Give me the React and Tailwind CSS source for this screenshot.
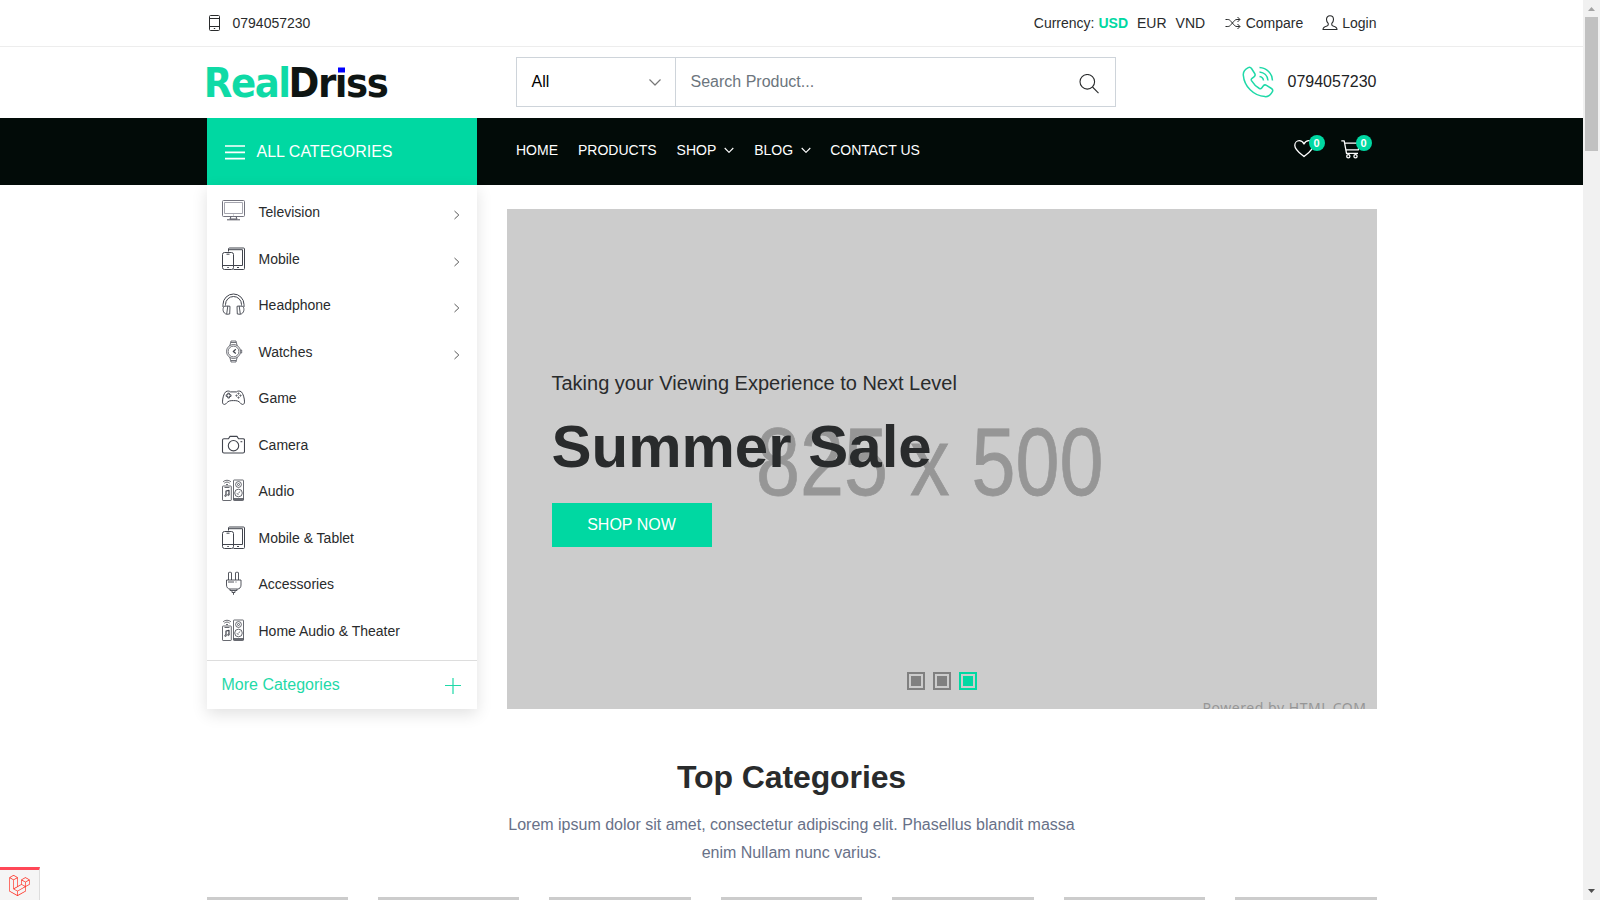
import React from "react";
import { FaLaravel } from "react-icons/fa";

function Icon({ children, className, box = 24, sw = 1 }) {
  return (
    <svg viewBox={`0 0 ${box} ${box}`} className={className} fill="none" stroke="currentColor" strokeWidth={sw} strokeLinejoin="round">
      {children}
    </svg>
  );
}

const Tv = () => (
  <Icon className="h-6 w-6">
    <rect x="1.5" y="1.500" width="22" height="16" rx="1" stroke="#73737e" />
    <path d="M3.500 3.500h18v11H3.500zM12 16h1" stroke="#a5a5ae" />
    <path d="M10 17.500l-1 2.500h7l-1-2.500M6 20.800h13" stroke="#555560" />
  </Icon>
);
const Mobile = () => (
  <Icon className="h-6 w-6">
    <path d="M7.500 5.500V3a1 1 0 0 1 1-1H22.500a1 1 0 0 1 1 1V22.500a1 1 0 0 1-1 1H12.500M8 3.700H21.500V19.500H13M16 21.500h2" />
    <rect x="1.500" y="6.500" width="11" height="17" rx="2" />
    <path d="M1.500 19.500h11M5.500 8.200h3M6.300 21.500h1.500" />
  </Icon>
);
const Headphone = () => (
  <Icon className="h-6 w-6">
    <path d="M2 15V12.500a10.500 10.500 0 0 1 21 0v2.500M4.500 13.500v-1a8 8 0 0 1 16 0v1" />
    <path d="M6.800 14l2.200 .3-.300 7.700-3 .3c-4-1-4.500-5.800-2.500-8zM18.200 14l-2.200 .3.300 7.700 3 .3c4-1 4.500-5.800 2.500-8zM6.800 14L5.700 22M18.200 14l1.100 8" strokeWidth=".9" />
  </Icon>
);
const Watch = () => (
  <Icon className="h-6 w-6" sw={0.75}>
    <circle cx="12.500" cy="12.500" r="7" />
    <circle cx="12.500" cy="12.500" r="5.400" />
    <path d="M8.800 6.800L10 2h5l1.200 4.800M10 3.500h5M8.800 18.200L10 23h5l1.200-4.800M10 21.500h5M19.500 11h1.200v3h-1.200" />
    <path d="M14.800 10.200L12.300 12.500l2.500 2" strokeWidth="1.200" />
  </Icon>
);
const Game = () => (
  <Icon className="h-6 w-6">
    <g transform="translate(0 .7)">
      <path d="M4.800 6c2-1 3.500-.8 4.700.2h6c1.200-1 2.700-1.200 4.700-.2 2 1.700 3.300 6.700 3.300 10.200 0 2.800-2.300 3.400-4 1.200-2-2.300-3.500-2.500-7-2.500s-5 .2-7 2.500c-1.700 2.200-4 1.600-4-1.200C1.500 12.700 2.800 7.700 4.800 6z" />
      <path d="M6.800 7.500h1.600v1.600H10v1.600H8.400v1.600H6.800v-1.600H5.200V9.100h1.600z" />
      <circle cx="17.500" cy="7.900" r=".6" /><circle cx="17.500" cy="11.900" r=".6" /><circle cx="15.500" cy="9.900" r=".6" /><circle cx="19.500" cy="9.900" r=".6" />
    </g>
  </Icon>
);
const Camera = () => (
  <Icon className="h-6 w-6" sw={1.100}>
    <g transform="translate(0 .7)">
      <path d="M3 6h4.500L9 3.700h7L17.500 6H22a1.500 1.500 0 0 1 1.500 1.500v11.300a1.500 1.500 0 0 1-1.500 1.500H3a1.500 1.500 0 0 1-1.500-1.500V7.500A1.500 1.500 0 0 1 3 6z" />
      <circle cx="12.500" cy="13" r="5.200" />
      <path d="M19.500 9h1.800" />
    </g>
  </Icon>
);
const Audio = () => (
  <Icon className="h-6 w-6" sw={0.8}>
    <rect x="1.500" y="8" width="8.800" height="14.500" rx=".6" />
    <path d="M2 4c2-2.300 6-2.300 8 0M3.300 5.200c1.600-1.500 3.900-1.500 5.400 0M5 6.500h2M3.500 9.500h5" />
    <path d="M5 17.500V13l3-.7v4.400" strokeWidth="1.200" />
    <circle cx="4.500" cy="17.700" r=".8" /><circle cx="7.400" cy="16.800" r=".8" />
    <rect x="12.500" y="2" width="10" height="20.500" rx=".6" />
    <circle cx="17.500" cy="6.500" r="2.900" /><circle cx="17.500" cy="6.500" r="1" />
    <circle cx="17.500" cy="15" r="3.800" /><path d="M19.200 13.500l-1.800 1.600M15.700 15.500l1.800 1M12.500 20.500h10M12.500 21.500h10" />
  </Icon>
);
const Plug = () => (
  <Icon className="h-6 w-6" sw={0.9}>
    <path d="M7.500 9V2a.7.700 0 0 1 .7-.7h1.600a.7.700 0 0 1 .7.700v7M14.500 9V2a.7.700 0 0 1 .7-.7h1.600a.7.700 0 0 1 .7.700v7" />
    <path d="M5.500 9h14.500v5c0 2.500-1.500 4-3.500 4H9c-2 0-3.500-1.500-3.500-4zM7 11h6M14.500 11h1M9 18v1.500h7V18M11 20v1.500h3V20M12.500 21.500v2.300" />
  </Icon>
);

const categories = [
  ["Television", Tv, true],
  ["Mobile", Mobile, true],
  ["Headphone", Headphone, true],
  ["Watches", Watch, true],
  ["Game", Game],
  ["Camera", Camera],
  ["Audio", Audio],
  ["Mobile & Tablet", Mobile],
  ["Accessories", Plug],
  ["Home Audio & Theater", Audio],
];

function TopBar() {
  return (
    <div className="h-[47px] border-b border-[#ededed]">
      <div className="mx-auto flex h-[46px] w-[1170px] items-center text-sm text-[#292b2c]">
        <Icon className="mr-[10px] h-4 w-4" box={16}>
          <rect x="2.500" y=".5" width="10" height="15" rx="1" />
          <path d="M2.500 3.500h10M2.500 11.500h10M6.800 13.500h1.400" />
        </Icon>
        <span>0794057230</span>
        <div className="ml-auto flex items-center">
          <span>Currency:</span>
          <span className="ml-1 font-bold text-[#00d8a2]">USD</span>
          <span className="ml-[9px]">EUR</span>
          <span className="ml-[9px]">VND</span>
          <Icon className="mr-[4.500px] ml-5 h-4 w-4" box={16}>
            <path d="M.5 4.500h2.300c1.500 0 2.300.8 3.200 1.900l2.800 3.300c.9 1.100 1.700 1.800 3.200 1.800h2.800M.5 11.500h2.300c1.500 0 2.300-.7 3.200-1.800l2.800-3.300c.9-1.100 1.700-1.900 3.200-1.900h2.800M12.500 2l2.500 2.500L12.500 7M12.500 9l2.500 2.500-2.500 2.500" />
          </Icon>
          <span>Compare</span>
          <Icon className="mr-[4.500px] ml-[18.500px] h-4 w-4" box={16} sw={1.100}>
            <path d="M8 .8c2.300 0 3.500 1.600 3.500 3.700 0 1.800-.8 3-1.700 3.900v1.400c0 .7.500 1 1.200 1.200 2.200.6 4 1.300 4 3.500H1c0-2.200 1.800-2.900 4-3.500.7-.2 1.200-.5 1.200-1.200V8.400C5.300 7.500 4.500 6.300 4.500 4.500 4.500 2.400 5.700.8 8 .8z" />
          </Icon>
          <span>Login</span>
        </div>
      </div>
    </div>
  );
}

function Header() {
  return (
    <div className="mx-auto flex h-[71px] w-[1170px] items-center">
      <svg className="h-12 w-[190px] overflow-visible" viewBox="0 0 190 48" fontFamily="'DejaVu Sans',sans-serif" fontWeight="700" fontSize="40">
        <g transform="scale(.93 1)" letterSpacing="-1.6">
          <text x="-3.500" y="38.500" fill="#0fdaa6">Real</text>
          <text x="87.700" y="38.500" fill="#0e1513">Driss</text>
        </g>
        <rect x="130" y="5" width="9" height="9.500" fill="#fff" />
        <rect x="131" y="8.500" width="7" height="5" fill="#0000ff" />
      </svg>
      <div className="-mt-px ml-[119px] flex h-[50px] w-[600px] border border-[#ced4da] text-base">
        <div className="flex w-[159px] items-center justify-between border-r border-[#ced4da] pr-[14px] pl-[15px] text-black">
          <span>All</span>
          <Icon className="h-3 w-3 text-[#777]" box={12} sw={1.200}><path d="M.5 3.500L6 9l5.500-5.500" /></Icon>
        </div>
        <div className="flex flex-1 items-center justify-between pr-4 pl-[15px] text-[#6c757d]">
          <span>Search Product...</span>
          <Icon className="relative top-0.5 h-5 w-5 text-[#292b2c]" box={20} sw={1.100}>
            <circle cx="8.300" cy="7.800" r="7.300" /><path d="M13.500 13l6 6.200" />
          </Icon>
        </div>
      </div>
      <div className="ml-auto flex items-center text-[#1d2224]">
        <Icon className="relative -top-px mr-[14px] h-8 w-8 text-[#1fd9a8]" box={32} sw={1.500}>
          <path d="M6.300 1.600c1.500-.8 2.400-.3 3.200.9l3.200 5c.8 1.300.5 2.400-.7 3.300l-2 1.500c-.9.700-1 1.400-.5 2.300 2.200 3.700 4.200 5.700 7.900 7.900.9.500 1.600.4 2.300-.5l1.500-2c.9-1.200 2-1.500 3.300-.7l5 3.200c1.200.8 1.700 1.700.9 3.200-1.500 2.800-4 5.300-7.500 4.900C11.500 29.800 2.200 20.500 1.300 9.100 1 5.600 3.500 3.100 6.300 1.600z" />
          <path d="M17.500 10.500c2.200.3 3.700 1.800 4 4M17.500 6c4.700.4 8.100 3.800 8.500 8.500M17.500 1.500c7.300.4 12.600 5.700 13 13" />
        </Icon>
        <span className="relative -top-px">0794057230</span>
      </div>
    </div>
  );
}

const NavChevron = () => (
  <Icon className="ml-2 h-[10px] w-[10px]" box={10} sw={1.100}><path d="M.7 3L5 7.300 9.300 3" /></Icon>
);

function Badge() {
  return (
    <span className="absolute -top-[5px] left-[15px] flex h-4 w-4 items-center justify-center rounded-full bg-[#00d8a2] text-[11px] font-bold leading-none text-white">0</span>
  );
}

function NavBar() {
  return (
    <div className="h-[67px] bg-[#020b08]">
      <div className="mx-auto flex h-full w-[1170px] text-sm text-white">
        <div className="flex w-[270px] items-center bg-[#00d8a2] pl-[18px] text-base">
          <Icon className="mr-3 h-5 w-5" box={20} sw={1.700}><path d="M0 4h20M0 10.300h20M0 16.700h20" /></Icon>
          <span>ALL CATEGORIES</span>
        </div>
        <div className="ml-[39.500px] flex items-center gap-5 pb-[3px]">
          <span>HOME</span>
          <span>PRODUCTS</span>
          <span className="flex items-center">SHOP<NavChevron /></span>
          <span className="flex items-center">BLOG<NavChevron /></span>
          <span className="-ml-px">CONTACT US</span>
        </div>
        <div className="mr-4 ml-auto flex gap-[27px] pt-[22px]">
          <div className="relative h-5 w-5">
            <Icon className="h-5 w-5" box={20} sw={1.300}>
              <path d="M10 16.600C5.500 12.800.8 9.800.8 5.500.8 2.800 2.800.700 5.300.700 7.300.700 9 2 10 4c1-2 2.700-3.300 4.700-3.300 2.500 0 4.500 2.100 4.500 4.800 0 4.300-4.700 7.300-9.200 11.100z" />
            </Icon>
            <Badge />
          </div>
          <div className="relative h-5 w-5">
            <Icon className="h-5 w-5" box={20} sw={1.300}>
              <path d="M.3.800h2.900l2.300 12.600h11.500M3.800 3.200h14.700l-1.200 6.600H5" />
              <circle cx="7.300" cy="16.300" r="1.600" /><circle cx="14.500" cy="16.300" r="1.600" />
            </Icon>
            <Badge />
          </div>
        </div>
      </div>
    </div>
  );
}

function Sidebar() {
  return (
    <div className="flex h-[524px] w-[270px] flex-col bg-white pt-1 shadow-[0_5px_15px_rgba(0,0,0,0.12)]">
      {categories.map(([name, Glyph, more]) => (
        <div key={name} className="flex h-[46.5px] items-center pr-[16px] pl-[14px] text-sm text-[#292b2c]">
          <span className="relative -top-px mr-[14px] text-[#41444d]"><Glyph /></span>
          <span>{name}</span>
          {more && (
            <Icon className="mt-[6px] ml-auto h-[10px] w-[8px] overflow-visible text-[#444]" box={8} sw={0.9}><path d="M1.500 0l4.300 4L1.500 8" /></Icon>
          )}
        </div>
      ))}
      <div className="mt-auto flex h-[49px] items-center justify-between border-t border-[#ddd] pr-4 pl-[15px] text-base text-[#1fd9a8]">
        <span>More Categories</span>
        <Icon className="relative top-px h-4 w-4" box={16} sw={1.200}><path d="M8 0v16M0 7.500h16" /></Icon>
      </div>
    </div>
  );
}

function Dot({ active }) {
  return (
    <span className={active ? "h-[18px] w-[18px] border-2 border-[#00d8a2] p-0.5" : "h-[18px] w-[18px] border-2 border-[#808080] p-0.5"}>
      <span className={active ? "block h-full bg-[#00d8a2]" : "block h-full bg-[#808080]"} />
    </span>
  );
}

function Hero() {
  return (
    <div className="relative mt-6 flex h-[500px] w-[870px] flex-col items-start overflow-hidden bg-[#ccc] pl-[45px]">
      <svg className="absolute inset-0 h-[500px] w-[870px]" viewBox="0 0 870 500" fill="#969696">
        <text x="249" y="286" fontSize="97" textLength="347.500" lengthAdjust="spacingAndGlyphs" stroke="#969696" strokeWidth=".8" fontFamily="'Liberation Sans',sans-serif">825 x 500</text>
        <text x="695.500" y="504" fontSize="14" textLength="163.500" fontFamily="'Noto Sans',sans-serif">Powered by HTML.COM</text>
      </svg>
      <div className="relative mt-[159px] text-xl leading-[30px] whitespace-nowrap text-[#292b2c]">Taking your Viewing Experience to Next Level</div>
      <h2 className="relative mt-[13px] text-[60px] leading-[72px] font-bold whitespace-nowrap text-[#292b2c]">Summer Sale</h2>
      <button className="relative mt-5 h-11 w-40 bg-[#00d8a2] text-base text-white">SHOP NOW</button>
      <div className="absolute bottom-[19px] left-[400px] flex gap-2">
        <Dot /><Dot /><Dot active />
      </div>
    </div>
  );
}

export default function App() {
  return (
    <div className="flex h-[900px] w-[1600px] overflow-hidden bg-white font-['Liberation_Sans',Arial,sans-serif]">
      <div className="relative w-[1583px]">
        <TopBar />
        <Header />
        <NavBar />
        <div className="mx-auto flex w-[1170px] gap-[30px]">
          <Sidebar />
          <Hero />
        </div>
        <div className="mt-[49px] text-center">
          <h2 className="text-[32px] leading-[38px] font-bold tracking-[-0.1px] text-[#292b2c]">Top Categories</h2>
          <p className="mx-auto mt-[15px] w-[585px] text-base leading-7 text-[#687188]">
            Lorem ipsum dolor sit amet, consectetur adipiscing elit. Phasellus blandit massa enim Nullam nunc varius.
          </p>
        </div>
        <div className="mx-auto mt-[30px] grid w-[1170px] grid-cols-7 gap-[30px]">
          {[0, 1, 2, 3, 4, 5, 6].map((n) => <div key={n} className="h-[141px] bg-[#ccc]" />)}
        </div>
        <div className="absolute top-[867px] left-0 flex h-[33px] w-10 items-center justify-center border-t-[3px] border-r border-t-[#ff4757] border-r-[#ddd] bg-[#f5f5f5]">
          <FaLaravel className="h-[21px] w-[21px] text-[#ff2d20]" />
        </div>
      </div>
      <div className="flex h-full w-[17px] flex-col items-center bg-[#f1f1f1]">
        <svg className="h-[17px] w-[17px]" viewBox="0 0 17 17" fill="#a3a3a3"><path d="M8.500 7L12 11H5z" /></svg>
        <div className="h-[134px] w-[13px] bg-[#c1c1c1]" />
        <svg className="mt-auto h-[17px] w-[17px]" viewBox="0 0 17 17" fill="#505050"><path d="M8.500 10L12 6H5z" /></svg>
      </div>
    </div>
  );
}
